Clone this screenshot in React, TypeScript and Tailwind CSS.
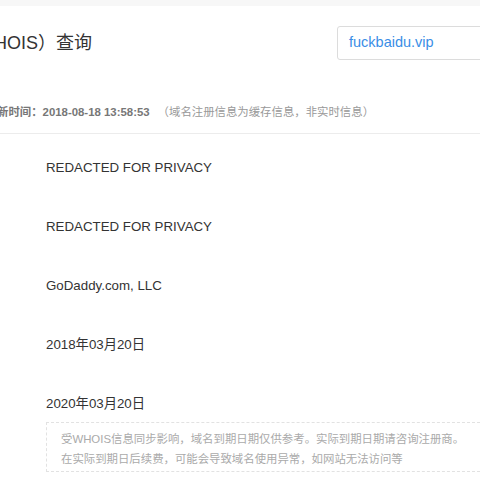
const rows = [
  'REDACTED FOR PRIVACY',
  'REDACTED FOR PRIVACY',
  'GoDaddy.com, LLC',
  '2018年03月20日',
  '2020年03月20日',
];

export default function App() {
  return (
    <div
      className="w-[480px] h-[480px] overflow-hidden bg-white"
      style={{ fontFamily: '"Liberation Sans", Arial, "Noto Sans CJK SC", sans-serif' }}
    >
      {/* top strip */}
      <div className="h-[6px] bg-[#f7f7f7]" />

      {/* header */}
      <div className="flex items-center justify-between h-[68px] pt-[6px]">
        <h1 className="-ml-[6px] text-[18px] text-[#333] font-normal whitespace-nowrap">HOIS）查询</h1>
        <div className="w-[150px] h-[34px] -mr-[7px] border border-[#dcdcdc] rounded-[3px] flex items-center pl-[11px]">
          <span className="text-[14.5px] text-[#3a8ee6]">fuckbaidu.vip</span>
        </div>
      </div>

      {/* update time */}
      <div className="h-[60px] border-b border-[#ececec] flex items-center pt-[18px] text-[11.4px] whitespace-nowrap">
        <span className="-ml-[3px] font-bold text-[#777]">新时间：2018-08-18 13:58:53</span>
        <span className="ml-[8px] text-[#999]">（域名注册信息为缓存信息，非实时信息）</span>
      </div>

      {/* rows */}
      <div className="pl-[46px] pt-[24px]">
        {rows.map((r, i) => (
          <div key={i} className="h-[59px] text-[13.3px] text-[#333] leading-[20px] whitespace-nowrap">
            {r}
          </div>
        ))}
        <div className="-mt-[31px] h-[50px] border border-dashed border-[#e2e2e2] border-r-0 pl-[14px] pt-[6px] text-[11.4px] leading-[20px] text-[#aaa] whitespace-nowrap">
          <div>受WHOIS信息同步影响，域名到期日期仅供参考。实际到期日期请咨询注册商。</div>
          <div>在实际到期日后续费，可能会导致域名使用异常，如网站无法访问等</div>
        </div>
      </div>
    </div>
  );
}
